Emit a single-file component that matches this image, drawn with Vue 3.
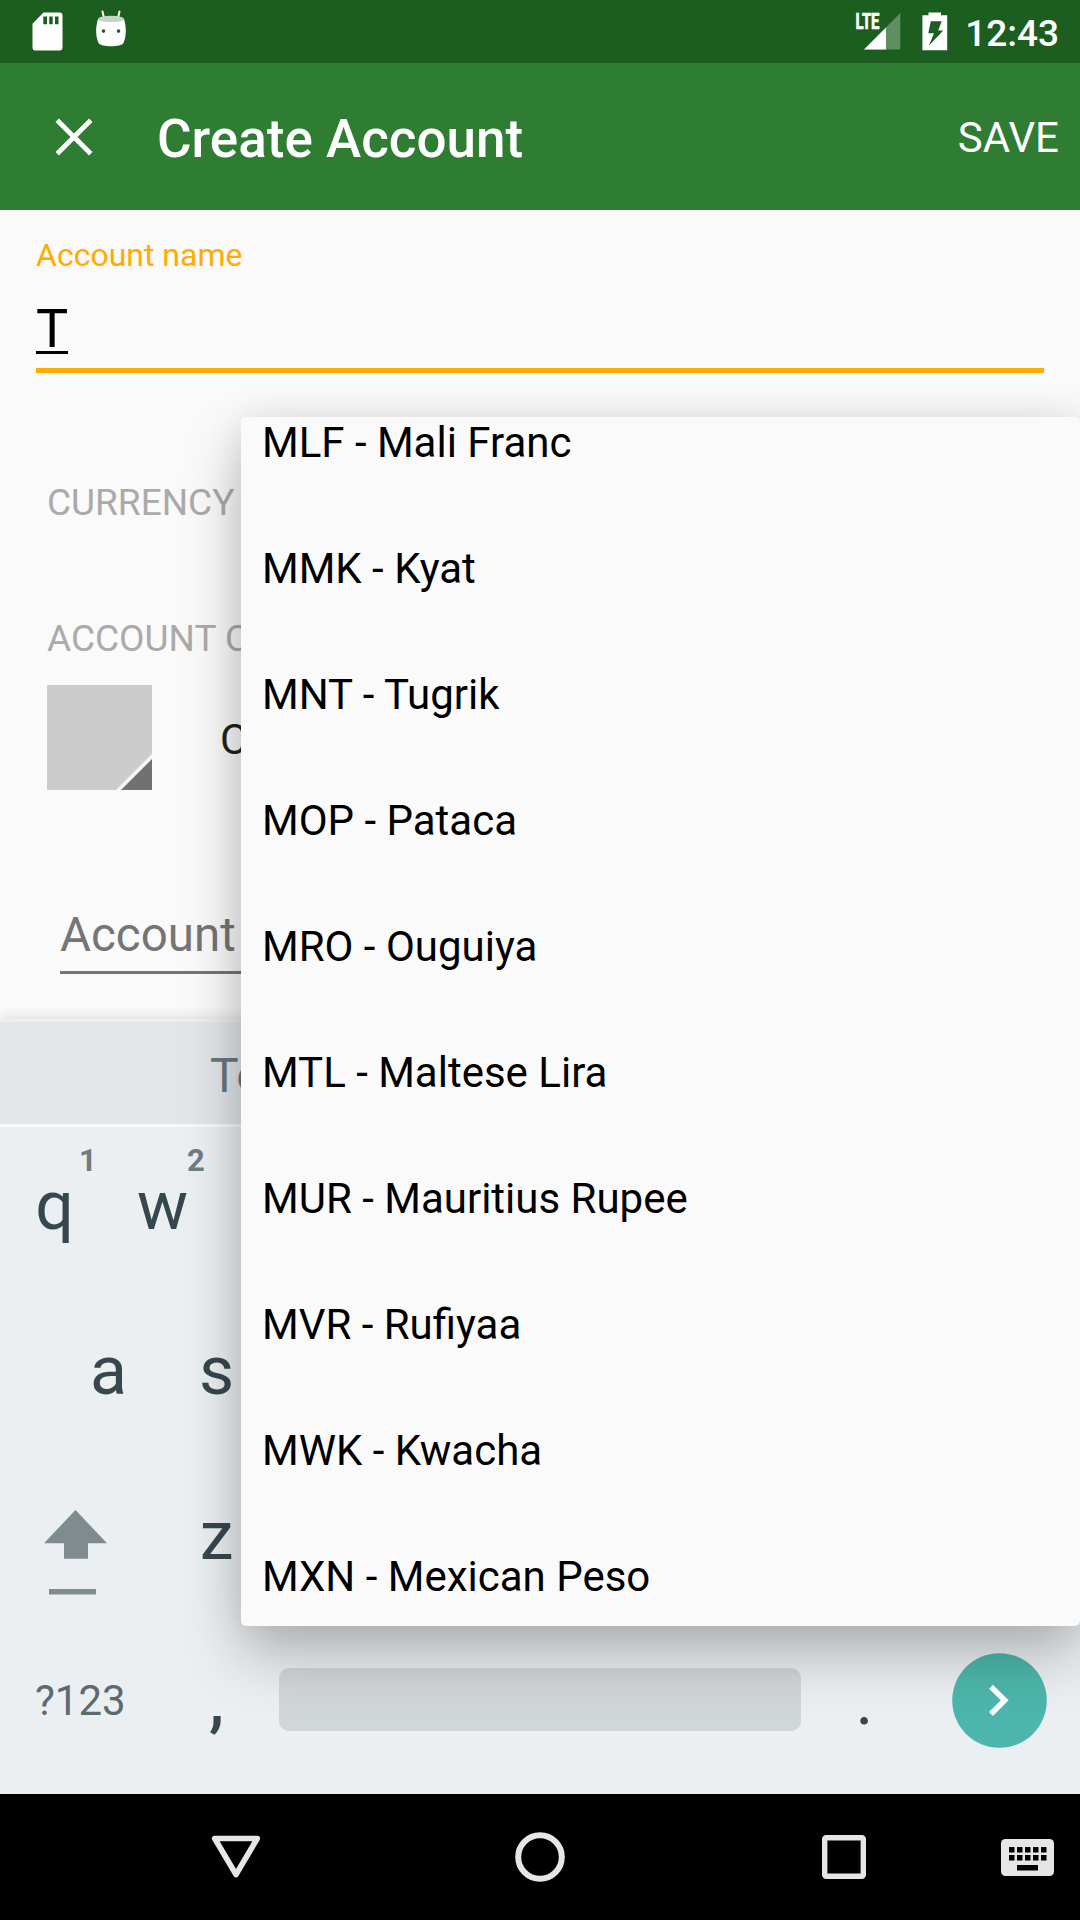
<script setup>
const currencies = [
  'MLF - Mali Franc',
  'MMK - Kyat',
  'MNT - Tugrik',
  'MOP - Pataca',
  'MRO - Ouguiya',
  'MTL - Maltese Lira',
  'MUR - Mauritius Rupee',
  'MVR - Rufiyaa',
  'MWK - Kwacha',
  'MXN - Mexican Peso',
]
const topRow = [
  { key: 'q', hint: '1' },
  { key: 'w', hint: '2' },
]
const homeRow = ['a', 's']
const keyCols = [0, 1, 2, 3, 4]
</script>

<template>
  <div class="screen">
    <header class="status">
      <svg class="sd" width="31" height="39" viewBox="0 0 31 39">
        <path fill="#fff" fill-rule="evenodd" d="M11.5 0.5H27.5a3 3 0 0 1 3 3V35.500a3 3 0 0 1-3 3H3.500a3 3 0 0 1-3-3V11.700ZM11.300 4.500V12.300H15V4.500ZM17.200 4.500V12.300H20.700V4.500ZM23 4.500V12.300H26.500V4.500Z" />
      </svg>
      <svg class="droid" width="32" height="38" viewBox="0 0 32 38">
        <path d="M7.500 1.500L9 8M24.500 1.500L23 8" stroke="#fff" stroke-width="2" stroke-linecap="round" />
        <path fill="#fff" fill-rule="evenodd" d="M3 9C6 12.500 26 12.500 29 9C31.500 17 31.500 26 28.500 33C26 37.300 6 37.300 3.500 33C0.500 26 0.500 17 3 9ZM8.500 19.300a1.800 1.800 0 1 0 0 3.600a1.800 1.800 0 1 0 0-3.600ZM23.500 19.300a1.800 1.800 0 1 0 0 3.600a1.800 1.800 0 1 0 0-3.600Z" />
        <ellipse cx="16" cy="9" rx="13" ry="3.300" fill="#c5d6c6" />
      </svg>
      <span class="grow"></span>
      <svg class="signal" width="46" height="38" viewBox="0 0 46 38">
        <path d="M45.300 1V37.500H9Z" fill="#fff" fill-opacity=".3" />
        <path d="M31 15.400V37.500H9Z" fill="#fff" />
        <text x="0.500" y="16.700" textLength="24" lengthAdjust="spacingAndGlyphs" class="lte">LTE</text>
      </svg>
      <svg class="battery" width="26" height="39" viewBox="0 0 26 39">
        <path fill="#fff" fill-rule="evenodd" d="M6.500 .5H19V3.200H25.200V38.300H.4V3.200H6.500ZM8.800 9.300L6.300 21.300H12L7 33.600L21.300 18.500H16.200L19.700 9.300Z" />
      </svg>
      <span class="clock">12:43</span>
    </header>

    <div class="appbar">
      <svg class="close" width="38" height="38" viewBox="0 0 38 38">
        <path d="M2.200 2.200L35.800 35.800M35.800 2.200L2.200 35.800" stroke="#fff" stroke-width="4.800" />
      </svg>
      <h1>Create Account</h1>
      <span class="save">SAVE</span>
    </div>

    <main class="form">
      <div class="label">Account name</div>
      <div class="input"><span>T</span></div>
      <div class="focus-line"></div>
      <div class="section currency">CURRENCY</div>
      <div class="section account">ACCOUNT C</div>
      <div class="color-row">
        <svg width="105" height="105" viewBox="0 0 105 105">
          <rect width="105" height="105" fill="#ccc" />
          <path d="M105 69V105H69Z" fill="#f5f5f5" />
          <path d="M105 74V105H74Z" fill="#717171" />
        </svg>
        <span>C</span>
      </div>
      <div class="desc">Account</div>
    </main>

    <section class="keyboard">
      <div class="suggest"><span>To</span></div>
      <div class="row">
        <div v-for="k in topRow" :key="k.key" class="key">{{ k.key }}<sup>{{ k.hint }}</sup></div>
      </div>
      <div class="row home">
        <div v-for="k in homeRow" :key="k" class="key">{{ k }}</div>
      </div>
      <div class="row">
        <div class="shift">
          <svg width="64" height="86" viewBox="0 0 64 86">
            <path d="M31.500 0L63 33.200H44V48.800H20V33.200H0ZM5 79H52V84.500H5Z" fill="#808b90" />
          </svg>
        </div>
        <div class="key">z</div>
      </div>
      <div class="row bottom">
        <div class="sym">?123</div>
        <div class="key comma">,</div>
        <div class="space"></div>
        <div class="key dot">.</div>
        <div class="enter">
          <svg width="95" height="95" viewBox="0 0 95 95">
            <circle cx="47.500" cy="47.500" r="47.300" fill="#4db6ac" />
            <path d="M39 33.700L52.700 47.300L39 61" fill="none" stroke="#fff" stroke-width="5.500" />
          </svg>
        </div>
      </div>
    </section>

    <nav class="navbar">
      <svg class="back" width="50" height="44" viewBox="0 0 50 44">
        <path d="M3.700 3.500H46.300L25 39.500Z" fill="none" stroke="#e6e6e6" stroke-width="5.600" stroke-linejoin="round" />
      </svg>
      <svg class="home-btn" width="50" height="50" viewBox="0 0 50 50">
        <circle cx="25" cy="25" r="21.800" fill="none" stroke="#e6e6e6" stroke-width="6" />
      </svg>
      <svg class="recent" width="44" height="44" viewBox="0 0 44 44">
        <rect x="2.700" y="2.700" width="38.600" height="38.600" rx="1.500" fill="none" stroke="#e6e6e6" stroke-width="5.400" />
      </svg>
      <svg class="ime" width="53" height="37" viewBox="0 0 53 37">
        <rect width="53" height="37" rx="4.500" fill="#e6e6e6" />
        <template v-for="c in keyCols" :key="c">
          <rect :x="8 + c * 8" y="8" width="5.500" height="5.500" />
          <rect :x="8 + c * 8" y="16" width="5.500" height="5.500" />
        </template>
        <rect x="16" y="26" width="21" height="5.500" />
      </svg>
    </nav>

    <ul class="popup">
      <li v-for="c in currencies" :key="c">{{ c }}</li>
    </ul>
  </div>
</template>

<style>
body {
  margin: 0;
}
</style>

<style scoped>
.screen {
  position: relative;
  width: 1080px;
  height: 1920px;
  overflow: hidden;
  display: flex;
  flex-direction: column;
  background: #fafafa;
  font-family: Roboto, "Noto Sans", sans-serif;
}
svg {
  display: block;
  flex: none;
  overflow: visible;
}
.grow {
  flex: 1;
}
.status {
  flex: none;
  display: flex;
  align-items: flex-start;
  height: 63px;
  box-sizing: border-box;
  padding: 12px 21px 0 32px;
  background: #1b5e20;
}
.droid {
  margin: -2px 0 0 31.5px;
}
.lte {
  font: 700 22px Roboto, sans-serif;
  fill: #fff;
  stroke: #fff;
  stroke-width: .7px;
}
.battery {
  margin-left: 21px;
}
.clock {
  margin-left: 17px;
  color: #fff;
  font-size: 37px;
  font-weight: 500;
  line-height: 43px;
}
.appbar {
  flex: none;
  display: flex;
  align-items: center;
  height: 147px;
  box-sizing: border-box;
  padding: 0 21px 0 54.5px;
  background: #2e7d32;
  color: #fff;
}
h1 {
  flex: 1;
  margin: 4px 0 0 64.5px;
  font-size: 53px;
  font-weight: 500;
  line-height: 64px;
}
.save {
  margin-top: 2px;
  font-size: 42px;
}
.form {
  flex: none;
  height: 809px;
  box-sizing: border-box;
  padding: 26px 36px 0;
}
.label {
  padding-bottom: 2px;
  color: #ffab00;
  font-size: 32px;
  line-height: 38px;
}
.input {
  margin-top: 21px;
  height: 63px;
  color: #000;
  font-size: 54px;
  line-height: 64px;
}
.input span {
  display: inline-block;
  height: 54px;
  border-bottom: 3px solid #000;
}
.focus-line {
  margin-top: 8px;
  height: 5px;
  background: #ffab00;
}
.section {
  margin-left: 11px;
  color: #aaa;
  font-size: 37px;
  line-height: 44px;
}
.currency {
  margin-top: 108px;
}
.account {
  margin-top: 92px;
}
.color-row {
  display: flex;
  align-items: center;
  gap: 68px;
  margin: 24px 0 0 11px;
  color: #212121;
  font-size: 42px;
}
.color-row span {
  margin-top: 4px;
}
.desc {
  margin: 117px 0 0 24px;
  padding-bottom: 8px;
  border-bottom: 3px solid #757575;
  color: #757575;
  font-size: 47.5px;
  line-height: 56px;
}
.keyboard {
  flex: none;
  height: 775px;
  box-sizing: border-box;
  border-top: 3px solid #eceeef;
  background: #ebeff2;
  box-shadow: 0 -2px 12px rgba(0, 0, 0, .12);
  color: #37474f;
}
.suggest {
  height: 102px;
  border-bottom: 3px solid #f6f8f9;
  background: #e2e6e9;
  color: #6a777e;
  font-size: 48px;
  line-height: 108px;
}
.suggest span {
  margin-left: 210px;
}
.row {
  display: flex;
  height: 165px;
}
.home {
  padding-left: 54px;
}
.key {
  position: relative;
  box-sizing: border-box;
  width: 108px;
  padding-left: 1px;
  font-size: 68px;
  line-height: 158px;
  text-align: center;
}
.key sup {
  position: absolute;
  top: 14px;
  left: 79px;
  color: #6f7c83;
  font-size: 31px;
  font-weight: 700;
  line-height: 40px;
}
.shift {
  width: 118px;
  padding: 53px 0 0 44px;
}
.sym {
  width: 127px;
  padding-left: 35px;
  color: #5b6a71;
  font-size: 42px;
  line-height: 157px;
}
.comma {
  font-weight: 500;
}
.space {
  width: 522px;
  height: 63px;
  margin: 46px 0 0 9px;
  border-radius: 10px;
  background: #d1d6d9;
}
.dot {
  margin-left: 9px;
}
.enter {
  margin: 30.5px 0 0 33.5px;
}
.navbar {
  flex: none;
  display: flex;
  align-items: center;
  height: 126px;
  background: #000;
}
.back {
  margin-left: 211px;
}
.home-btn {
  margin-left: 254px;
}
.recent {
  margin-left: 257px;
}
.ime {
  margin-left: 135px;
}
.popup {
  position: absolute;
  top: 417px;
  left: 241px;
  width: 839px;
  height: 1209px;
  box-sizing: border-box;
  margin: 0;
  padding: 0 0 0 21px;
  overflow: hidden;
  list-style: none;
  border-radius: 5px;
  background: #fafafa;
  box-shadow: 0 0 36px rgba(0, 0, 0, .08), 0 28px 60px rgba(0, 0, 0, .25);
  color: #000;
  font-size: 42px;
}
.popup li {
  height: 126px;
  line-height: 126px;
}
.popup li:first-child {
  margin-top: -37px;
}
</style>
